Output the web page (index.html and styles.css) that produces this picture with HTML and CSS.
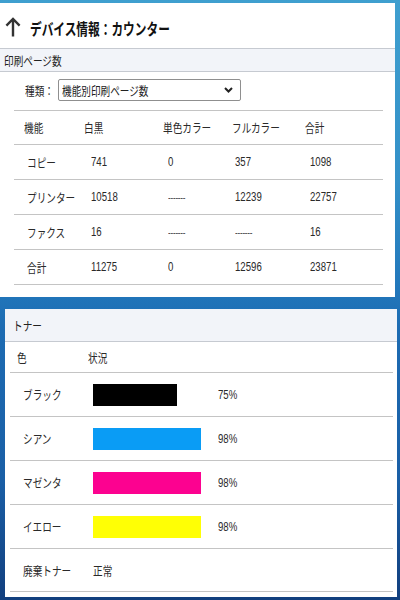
FILE: index.html
```html
<!DOCTYPE html>
<html lang="ja">
<head>
<meta charset="utf-8">
<link rel="stylesheet" href="styles.css">
</head>
<body>
<div class="panel panel-counter">
  <div class="page-head">
    <svg class="back" width="16" height="21" viewBox="0 0 16 21"><path d="M8 20.5V3.2M1.4 9.6L8 3 14.6 9.6" fill="none" stroke="#333" stroke-width="2.4"/></svg>
    <h1 class="title">デバイス情報：カウンター</h1>
  </div>
  <div class="band band-1"><span class="sx">印刷ページ数</span></div>
  <div class="type-row">
    <span class="label sx">種類：</span>
    <div class="select">
      <span class="sx">機能別印刷ページ数</span>
      <svg class="chev" width="9" height="6" viewBox="0 0 9 6"><path d="M1 1l3.5 3.5L8 1" fill="none" stroke="#222" stroke-width="2"/></svg>
    </div>
  </div>
  <div class="count-table">
    <div class="crow chead"><span>機能</span><span>白黒</span><span>単色カラー</span><span>フルカラー</span><span>合計</span></div>
    <div class="crow cdata"><span>コピー</span><span>741</span><span>0</span><span>357</span><span>1098</span></div>
    <div class="crow cdata"><span>プリンター</span><span>10518</span><span class="dash">-------</span><span>12239</span><span>22757</span></div>
    <div class="crow cdata"><span>ファクス</span><span>16</span><span class="dash">-------</span><span class="dash">-------</span><span>16</span></div>
    <div class="crow cdata"><span>合計</span><span>11275</span><span>0</span><span>12596</span><span>23871</span></div>
  </div>
</div>
<div class="panel panel-toner">
  <div class="band band-2"><span class="sx">トナー</span></div>
  <div class="toner-table">
    <div class="trow thead"><span class="sx">色</span><span class="sx">状況</span></div>
    <div class="trow"><span class="sx">ブラック</span><div class="track"><div class="bar black" style="width:76%"></div></div><span class="sx">75%</span></div>
    <div class="trow"><span class="sx">シアン</span><div class="track"><div class="bar cyan" style="width:98%"></div></div><span class="sx">98%</span></div>
    <div class="trow"><span class="sx">マゼンタ</span><div class="track"><div class="bar magenta" style="width:98%"></div></div><span class="sx">98%</span></div>
    <div class="trow"><span class="sx">イエロー</span><div class="track"><div class="bar yellow" style="width:98%"></div></div><span class="sx">98%</span></div>
    <div class="trow"><span class="sx">廃棄トナー</span><span class="sx">正常</span></div>
  </div>
</div>
</body>
</html>
```
FILE: styles.css
```css
html, body {
  margin: 0;
  padding: 0;
}
body {
  width: 400px;
  height: 600px;
  overflow: hidden;
  background: linear-gradient(180deg, #3f9fcf 0%, #3390c8 30%, #2277bb 48%, #1d6bb2 55%, #1a5fa6 80%, #123f7e 100%);
  font-family: "Liberation Sans", "Noto Sans CJK JP", sans-serif;
  font-size: 12.5px;
  color: #2a2a2a;
}
.sx, .crow > span {
  display: inline-block;
  transform: scaleX(0.77);
  transform-origin: 0 50%;
  white-space: nowrap;
}
.panel {
  background: #fff;
}
.panel-counter {
  margin: 3px 5px 0 0;
  height: 294px;
}
.page-head {
  height: 45px;
  display: flex;
  align-items: center;
  padding-left: 5px;
  gap: 9px;
}
.back {
  margin-top: 2px;
}
.title {
  margin: 0;
  font-size: 16px;
  font-weight: bold;
  color: #111;
  display: inline-block;
  transform: scaleX(0.73);
  transform-origin: 0 50%;
  white-space: nowrap;
  margin-top: 4px;
}
.band {
  background: #f2f4f9;
  border-top: 1px solid #c6cad1;
  border-bottom: 1px solid #c6cad1;
  display: flex;
  align-items: center;
  color: #222;
}
.band-1 {
  height: 22px;
  padding-left: 4px;
}
.band-2 {
  height: 32px;
  border-top: none;
  padding-left: 8px;
}
.type-row {
  height: 38px;
  display: flex;
  align-items: center;
  padding-left: 25px;
  box-sizing: border-box;
  padding-bottom: 2px;
}
.label {
  width: 33px;
}
.select {
  width: 183px;
  height: 22px;
  box-sizing: border-box;
  border: 1px solid #8f8f8f;
  border-radius: 2px;
  display: flex;
  align-items: center;
  justify-content: space-between;
  padding: 0 7px 0 3px;
  color: #222;
}
.count-table {
  margin: 0 12px 0 14px;
  border-top: 1px solid #c4c4c4;
}
.crow {
  display: grid;
  align-items: center;
  border-bottom: 1px solid #c4c4c4;
  height: 35px;
  box-sizing: border-box;
}
.chead {
  height: 34px;
  grid-template-columns: 60px 79px 69px 73px 1fr;
  padding-left: 10px;
}
.cdata {
  grid-template-columns: 64px 77px 67px 75px 1fr;
  padding-left: 13px;
}
.crow > span.dash {
  font-size: 10.5px;
  color: #444;
  letter-spacing: -0.3px;
}
.panel-toner {
  margin: 12px 3px 0 5px;
  height: 288px;
}
.toner-table {
  margin: 0 4px 0 5px;
}
.trow {
  display: grid;
  grid-template-columns: 70px 125px 1fr;
  align-items: center;
  padding-left: 13px;
  height: 44px;
  box-sizing: border-box;
  border-bottom: 1px solid #c4c4c4;
}
.thead {
  height: 31px;
  padding-left: 7px;
  grid-template-columns: 71px 1fr;
}
.trow:last-child {
  grid-template-columns: 70px 1fr;
  height: 43px;
}
.track {
  width: 110px;
  height: 22px;
}
.bar {
  height: 22px;
}
.black { background: #000; }
.cyan { background: #0a9cf5; }
.magenta { background: #fc0290; }
.yellow { background: #ffff05; }
```
